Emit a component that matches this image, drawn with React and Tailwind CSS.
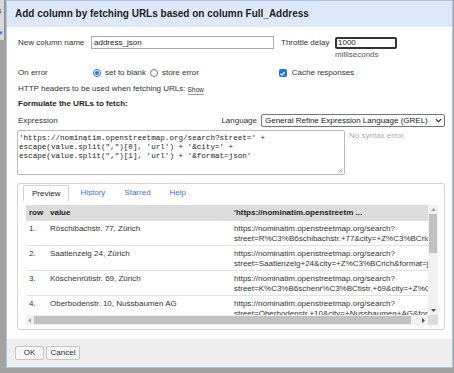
import React from 'react';

const rows = [
  ['1.', 'Röschibachstr. 77, Zürich', 'street=R%C3%B6schibachstr.+77&city=+Z%C3%BCrich&format=json'],
  ['2.', 'Saatlenzelg 24, Zürich', 'street=Saatlenzelg+24&city=+Z%C3%BCrich&format=json'],
  ['3.', 'Köschenrütistr. 69, Zürich', 'street=K%C3%B6schenr%C3%BCtistr.+69&city=+Z%C3%BCrich&format=json'],
  ['4.', 'Oberbodenstr. 10, Nussbaumen AG', 'street=Oberbodenstr.+10&city=+Nussbaumen+AG&format=json'],
];

function Radio({ checked }) {
  return checked ? (
    <span className="shrink-0 w-[8px] h-[8px] rounded-full border-[1.5px] border-[#1a73e8] flex items-center justify-center">
      <span className="block w-[4px] h-[4px] rounded-full bg-[#1a73e8]"></span>
    </span>
  ) : (
    <span className="shrink-0 block w-[8px] h-[8px] rounded-full border border-[#767676] bg-white"></span>
  );
}

export default function App() {
  return (
    <div className="w-[454px] h-[373px] bg-[#a2a2a2] flex items-start overflow-hidden font-['Liberation_Sans',Arial,sans-serif] text-[8px] leading-[10px] text-[#333]">
      {/* page behind the dialog */}
      <div className="w-[5px] h-[40px] bg-[#d9d9d9] border-r border-[#8c8c8c] overflow-hidden flex flex-col text-[7px]">
        <span className="mt-[6px] -ml-[2px] text-[#333]">s</span>
        <span className="mt-[12px] -ml-[1px] text-[#3b6fd8]">▾</span>
      </div>

      <div className="ml-[1px] w-[447px] h-[368px] border border-[#a9c4ec] bg-white flex flex-col">
        {/* title */}
        <div className="h-[26px] bg-[#dde9fb] pl-[8px] flex items-center text-[10px] font-bold text-[#222]">
          Add column by fetching URLs based on column Full_Address
        </div>

        {/* body */}
        <div className="flex-1 flex flex-col pl-[10px] pr-[7px] pt-[9px]">
          <div className="flex items-start h-[23px]">
            <span className="w-[74px] pl-[1px] mt-[2px]">New column name</span>
            <div className="w-[183px] h-[13px] border border-[#aaa] pl-[2px] flex items-center text-[#222]">address_json</div>
            <span className="ml-[7px] w-[54px] mt-[2px]">Throttle delay</span>
            <div className="flex flex-col mt-[1px]">
              <div className="w-[62px] h-[12px] border-2 border-[#333] rounded-[2px] pl-[1px] flex items-center text-[#222]">1000</div>
              <span className="mt-[1px] text-[#555]">milliseconds</span>
            </div>
          </div>

          <div className="flex items-center h-[10px] mt-[9px]">
            <span className="w-[76px] pl-[1px]">On error</span>
            <Radio checked />
            <span className="ml-[4px]">set to blank</span>
            <span className="ml-[4px]"><Radio /></span>
            <span className="ml-[4px]">store error</span>
            <span className="ml-[80px] shrink-0 w-[8px] h-[8px] rounded-[2px] bg-[#1a73e8] flex items-center justify-center">
              <svg width="7" height="7" viewBox="0 0 10 10"><path d="M2 5.2 L4.2 7.3 L8.2 2.8" fill="none" stroke="white" strokeWidth="1.8" /></svg>
            </span>
            <span className="ml-[5px]">Cache responses</span>
          </div>

          <div className="flex items-center h-[10px] mt-[6px] pl-[1px]">
            <span>HTTP headers to be used when fetching URLs:</span>
            <span className="ml-[2px] text-[6.5px] leading-[8px] text-[#333] border-b border-[#8a8ff0] mt-[2px]">Show</span>
          </div>

          <div className="h-[10px] mt-[5px] pl-[1px] font-bold text-[#222]">Formulate the URLs to fetch:</div>

          <div className="flex items-center h-[13px] mt-[5px]">
            <span className="pl-[1px] flex-1">Expression</span>
            <span className="mr-[4px]">Language</span>
            <div className="w-[184px] h-[13px] border border-[#767676] rounded-[2px] pl-[3px] pr-[2px] flex items-center justify-between text-[#222]">
              <span>General Refine Expression Language (GREL)</span>
              <svg width="7" height="5" viewBox="0 0 8 5"><path d="M1 1 L4 4 L7 1" fill="none" stroke="#222" strokeWidth="1.3" /></svg>
            </div>
          </div>

          <div className="flex items-start mt-[3px]">
            <div className="relative w-[328px] h-[45px] border border-[#bbb] rounded-[2px] pl-[1px] pt-[3px] font-['Liberation_Mono','Courier_New',monospace] text-[7.6px] leading-[9px] text-[#222] whitespace-pre">
              {"'https://nominatim.openstreetmap.org/search?street=' +\nescape(value.split(\",\")[0], 'url') + '&city=' +\nescape(value.split(\",\")[1], 'url') + '&format=json'"}
              <svg className="absolute right-[1px] bottom-[1px]" width="5" height="5" viewBox="0 0 5 5"><path d="M0.5 4.5 L4.5 0.5 M2.5 4.5 L4.5 2.5" stroke="#999" strokeWidth="0.8" /></svg>
            </div>
            <span className="ml-[4px] mt-[1px] text-[#aaa]">No syntax error.</span>
          </div>

          {/* preview panel */}
          <div className="mt-[8px] h-[147px] border border-[#d3d3d3] rounded-[3px] flex flex-col pl-[8px] pr-[4px]">
            <div className="flex h-[21px] items-start">
              <div className="ml-[-3px] mt-[1px] h-[16px] px-[8px] border border-b-0 border-[#d3d3d3] rounded-t-[2px] bg-white flex items-center text-[#222]">Preview</div>
              <div className="ml-[3px] mt-[1px] h-[16px] px-[8px] flex items-center text-[#3a70d6]">History</div>
              <div className="ml-[3px] mt-[1px] h-[16px] px-[8px] flex items-center text-[#3a70d6]">Starred</div>
              <div className="ml-[3px] mt-[1px] h-[16px] px-[8px] flex items-center text-[#3a70d6]">Help</div>
            </div>

            <div className="flex flex-col h-[120px]">
              <div className="flex h-[110px]">
                <div className="w-[402px] overflow-hidden flex flex-col">
                  <div className="flex h-[16px] shrink-0 items-center bg-[#dcdcdc] font-bold text-[#222] whitespace-nowrap">
                    <span className="w-[24px] pl-[3px] shrink-0">row</span>
                    <span className="w-[184px] shrink-0">value</span>
                    <span>'https://nominatim.openstreetm ...</span>
                  </div>
                  {rows.map((r) => (
                    <div key={r[0]} className="flex h-[25px] shrink-0 items-start pt-[3px] border-b border-[#e2e2e2] whitespace-nowrap">
                      <span className="w-[24px] pl-[3px] shrink-0">{r[0]}</span>
                      <span className="w-[184px] shrink-0">{r[1]}</span>
                      <div className="flex flex-col">
                        <span>https://nominatim.openstreetmap.org/search?</span>
                        <span>{r[2]}</span>
                      </div>
                    </div>
                  ))}
                </div>
                <div className="w-[10px] bg-[#f1f1f1] flex flex-col items-center">
                  <svg className="mt-[3px]" width="5" height="3" viewBox="0 0 5 3"><path d="M0 3 L2.5 0 L5 3 Z" fill="#a3a3a3" /></svg>
                  <div className="mt-[3px] w-[8px] h-[39px] bg-[#c1c1c1]"></div>
                  <div className="flex-1"></div>
                  <svg className="mb-[3px]" width="5" height="3" viewBox="0 0 5 3"><path d="M0 0 L2.5 3 L5 0 Z" fill="#505050" /></svg>
                </div>
              </div>
              <div className="flex h-[10px]">
                <div className="w-[402px] bg-[#f1f1f1] flex items-center">
                  <svg className="ml-[2px]" width="3" height="5" viewBox="0 0 3 5"><path d="M3 0 L0 2.5 L3 5 Z" fill="#a3a3a3" /></svg>
                  <div className="ml-[3px] w-[377px] h-[8px] bg-[#c1c1c1]"></div>
                  <div className="flex-1"></div>
                  <svg className="mr-[3px]" width="3" height="5" viewBox="0 0 3 5"><path d="M0 0 L3 2.5 L0 5 Z" fill="#505050" /></svg>
                </div>
                <div className="w-[10px] bg-[#dcdcdc]"></div>
              </div>
            </div>
          </div>
        </div>

        {/* footer */}
        <div className="h-[28px] bg-[#eeeeee] flex items-center pl-[8px] gap-[2px]">
          <button className="h-[14px] w-[29px] border border-[#c5c5c5] rounded-[2px] bg-[#f6f6f6] text-[#333] text-[8px] leading-[10px]">OK</button>
          <button className="h-[14px] w-[34px] border border-[#c5c5c5] rounded-[2px] bg-[#f6f6f6] text-[#333] text-[8px] leading-[10px]">Cancel</button>
        </div>
      </div>
    </div>
  );
}
